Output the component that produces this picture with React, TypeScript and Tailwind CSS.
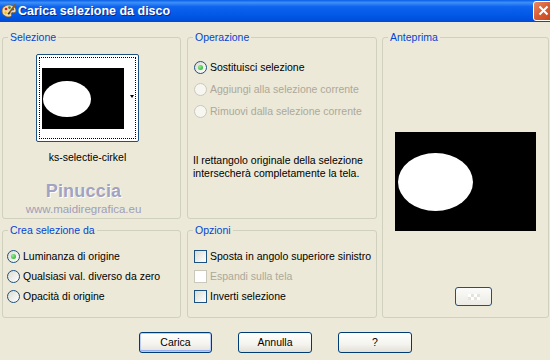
import React from 'react'

function Radio({ label, checked = false, disabled = false }: { label: string; checked?: boolean; disabled?: boolean }) {
  return (
    <div className="flex h-[13px] items-center gap-[3px]">
      <span
        className={
          disabled
            ? 'flex h-[13px] w-[13px] shrink-0 items-center justify-center rounded-full border border-[#cac8bb] bg-[#f7f6f0]'
            : 'flex h-[13px] w-[13px] shrink-0 items-center justify-center rounded-full border border-[#1c5180] bg-[linear-gradient(135deg,#dcdcd4,#ffffff)]'
        }
      >
        {checked && <span className="h-[5px] w-[5px] rounded-full bg-[radial-gradient(circle_at_35%_35%,#8ef08a,#21a121)]" />}
      </span>
      <span className={disabled ? 'whitespace-nowrap text-[#aca899]' : 'whitespace-nowrap text-black'}>{label}</span>
    </div>
  )
}

function Check({ label, disabled = false }: { label: string; disabled?: boolean }) {
  return (
    <div className="flex h-[13px] items-center gap-[3px]">
      <span
        className={
          disabled
            ? 'h-[13px] w-[13px] shrink-0 border border-[#cac8bb] bg-white'
            : 'h-[13px] w-[13px] shrink-0 border border-[#1c5180] bg-[linear-gradient(135deg,#dcdcd4,#ffffff)]'
        }
      />
      <span className={disabled ? 'whitespace-nowrap text-[#aca899]' : 'whitespace-nowrap text-black'}>{label}</span>
    </div>
  )
}

function Group({ title, className, children }: { title: string; className: string; children?: React.ReactNode }) {
  return (
    <fieldset className={'rounded-[3px] border border-[#d0d0bf] ' + className}>
      <legend className="ml-[5px] block px-[2px] leading-[13px] text-[#0046d5]">{title}</legend>
      {children}
    </fieldset>
  )
}

function XpButton({ label, isDefault = false }: { label: string; isDefault?: boolean }) {
  return (
    <button
      className={
        isDefault
          ? 'h-[21px] w-[73px] rounded-[3px] border border-[#003c74] bg-[linear-gradient(#ffffff,#f4f3ee_60%,#e3e0d5)] shadow-[inset_0_0_0_1px_#b9cdf5,inset_0_-2px_0_#97aef0]'
          : 'h-[21px] w-[74px] rounded-[3px] border border-[#003c74] bg-[linear-gradient(#ffffff,#f4f3ee_60%,#e3e0d5)]'
      }
    >
      {label}
    </button>
  )
}

export default function App() {
  return (
    <div className="h-[360px] w-[550px] overflow-hidden bg-[#ece9d8] font-['Liberation_Sans',Arial,sans-serif] text-[10.5px] text-black">
      {/* title bar */}
      <div className="flex h-[22px] items-center justify-between bg-[linear-gradient(#0a5ee6,#3d8ff8_12%,#0f64ee_30%,#0058e6_70%,#004bd6)]">
        <div className="flex items-center">
          <svg width="16" height="16" viewBox="0 0 16 16" className="ml-[1px]">
            <path d="M8 2c4 0 7 2.5 7 5.5 0 2-1.6 2.6-3 2.2-1.3-.4-2 .5-1.6 1.6.6 1.7-.6 2.7-2.4 2.7C4 14 1 11.5 1 8s3-6 7-6z" fill="#f3d9a4" stroke="#7a5a2c" strokeWidth="0.8" />
            <circle cx="5" cy="6" r="1.3" fill="#e02020" />
            <circle cx="8.5" cy="4.6" r="1.3" fill="#2a8a2a" />
            <circle cx="11.8" cy="6.2" r="1.2" fill="#2050e0" />
            <circle cx="4.6" cy="9.8" r="1.2" fill="#f0c000" />
            <path d="M14.5 1.2L8.5 9.5" stroke="#8a5a20" strokeWidth="1.6" />
            <path d="M8.8 9.2l-1.6 2" stroke="#333" strokeWidth="1.8" />
          </svg>
          <span className="ml-[1px] text-[12.5px] font-bold text-white [text-shadow:1px_1px_0_#0a2a8a]">Carica selezione da disco</span>
        </div>
        <div className="mr-[-4px] mt-[-1px] flex h-[20px] w-[21px] items-center justify-center rounded-[3px] border border-white bg-[linear-gradient(135deg,#e88a66,#d85a32_50%,#c2421c)]">
          <svg width="11" height="11" viewBox="0 0 11 11">
            <path d="M1.5 1.5l8 8M9.5 1.5l-8 8" stroke="white" strokeWidth="2" />
          </svg>
        </div>
      </div>

      {/* groups */}
      <div className="flex pl-[2px] pt-[9px]">
        <div className="flex w-[179px] flex-col gap-[5px]">
          <Group title="Selezione" className="h-[188px]">
            <div className="ml-[33px] mt-[10px] flex w-[103px] flex-col items-center">
              <div className="h-[88px] w-[103px] rounded-[2px] border border-[#1c5180] bg-white p-[2px]">
                <div className="relative flex h-full items-center border border-dotted border-black pl-[2px]">
                  <svg width="82" height="61" viewBox="0 0 82 61">
                    <rect width="82" height="61" fill="#000" />
                    <ellipse cx="25" cy="31" rx="24" ry="18" fill="#fff" />
                  </svg>
                  <span className="absolute right-[1px] top-[37px] h-0 w-0 border-x-[2.5px] border-t-[3px] border-x-transparent border-t-black" />
                </div>
              </div>
              <div className="mt-[9px] whitespace-nowrap leading-[13px]">ks-selectie-cirkel</div>
            </div>
            <div className="mt-[18px] flex flex-col items-center pr-[16px]">
              <div className="text-[18px] font-bold leading-[19px] tracking-[0.2px] text-[#a2a2c2] [text-shadow:1px_1px_0_#ffffff]">Pinuccia</div>
              <div className="mt-[2px] text-[11.5px] leading-[12px] text-[#9e9eb8]">www.maidiregrafica.eu</div>
            </div>
          </Group>
          <Group title="Crea selezione da" className="h-[94px]">
            <div className="ml-[4px] mt-[13px] flex flex-col gap-[7px]">
              <Radio label="Luminanza di origine" checked />
              <Radio label="Qualsiasi val. diverso da zero" />
              <Radio label="Opacità di origine" />
            </div>
          </Group>
        </div>

        <div className="ml-[6px] flex w-[190px] flex-col gap-[5px]">
          <Group title="Operazione" className="h-[188px]">
            <div className="ml-[6px] mt-[17px] flex flex-col gap-[9px]">
              <Radio label="Sostituisci selezione" checked />
              <Radio label="Aggiungi alla selezione corrente" disabled />
              <Radio label="Rimuovi dalla selezione corrente" disabled />
            </div>
            <p className="ml-[5px] mt-[36px] leading-[13px]">
              Il rettangolo originale della selezione
              <br />
              intersecherà completamente la tela.
            </p>
          </Group>
          <Group title="Opzioni" className="h-[94px]">
            <div className="ml-[6px] mt-[13px] flex flex-col gap-[7px]">
              <Check label="Sposta in angolo superiore sinistro" />
              <Check label="Espandi sulla tela" disabled />
              <Check label="Inverti selezione" />
            </div>
          </Group>
        </div>

        <Group title="Anteprima" className="ml-[5px] h-[287px] w-[167px]">
          <svg width="141" height="99" viewBox="0 0 141 99" className="ml-[12px] mt-[88px] block">
            <rect width="141" height="99" fill="#000" />
            <ellipse cx="40.5" cy="50" rx="37.5" ry="29" fill="#fff" />
          </svg>
          <div className="ml-[72px] mt-[56px] flex h-[19px] w-[37px] items-center justify-center rounded-[3px] border border-[#1c5180] bg-[linear-gradient(#fbfbf9,#ecebe4)]">
            <div className="grid grid-cols-4">
              <span className="h-[3px] w-[3px] bg-white" />
              <span className="h-[3px] w-[3px] bg-[#e4e3dc]" />
              <span className="h-[3px] w-[3px] bg-white" />
              <span className="h-[3px] w-[3px] bg-[#e4e3dc]" />
              <span className="h-[3px] w-[3px] bg-[#e4e3dc]" />
              <span className="h-[3px] w-[3px] bg-white" />
              <span className="h-[3px] w-[3px] bg-[#e4e3dc]" />
              <span className="h-[3px] w-[3px] bg-white" />
            </div>
          </div>
        </Group>
      </div>

      {/* buttons */}
      <div className="mt-[14px] flex justify-center gap-[26px] pl-[1px]">
        <XpButton label="Carica" isDefault />
        <XpButton label="Annulla" />
        <XpButton label="?" />
      </div>
    </div>
  )
}
